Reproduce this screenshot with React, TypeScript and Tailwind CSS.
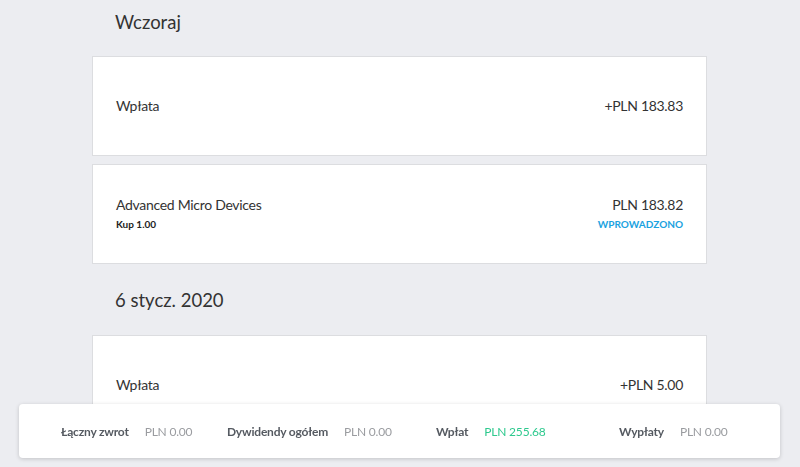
const groups = [
  {
    date: 'Wczoraj',
    first: true,
    items: [
      { title: 'Wpłata', amount: '+PLN 183.83' },
      { title: 'Advanced Micro Devices', sub: 'Kup 1.00', amount: 'PLN 183.82', status: 'WPROWADZONO' },
    ],
  },
  {
    date: '6 stycz. 2020',
    items: [{ title: 'Wpłata', amount: '+PLN 5.00' }],
  },
];

const totals = [
  { label: 'Łączny zwrot', value: 'PLN 0.00', w: 'w-[166px]' },
  { label: 'Dywidendy ogółem', value: 'PLN 0.00', w: 'w-[209px]' },
  { label: 'Wpłat', value: 'PLN 255.68', w: 'w-[183px]', green: true },
  { label: 'Wypłaty', value: 'PLN 0.00', w: 'w-[150px]' },
];

export default function App() {
  return (
    <div className="min-h-screen bg-[#ecedf1] font-['Lato',sans-serif] text-[#333]">
      <div className="ml-[92px] w-[615px] pb-16">
        {groups.map((g) => (
          <section key={g.date}>
            <h2
              className={`${g.first ? 'pt-[8px] pb-[20px]' : 'pt-[22px] pb-[21px]'} pl-[23px] text-[18.5px] leading-[28px] text-[#333]`}
            >
              {g.date}
            </h2>
            <div className="flex flex-col gap-[8px]">
              {g.items.map((it, i) => (
                <div
                  key={i}
                  className="flex h-[100px] items-center justify-between border border-[#dcdde0] bg-white px-[23px]"
                >
                  <div>
                    <p className="text-[14px] leading-[20px] tracking-[-0.3px]">{it.title}</p>
                    {it.sub && <p className="text-[10px] font-bold leading-[18px] text-[#222]">{it.sub}</p>}
                  </div>
                  <div className="text-right">
                    <p className="text-[14px] leading-[20px] tracking-[-0.3px]">{it.amount}</p>
                    {it.status && (
                      <p className="text-[10px] font-bold leading-[18px] text-[#1aa2e0]">{it.status}</p>
                    )}
                  </div>
                </div>
              ))}
            </div>
          </section>
        ))}
      </div>

      <div className="fixed bottom-[9px] left-[19px] flex h-[54px] w-[761px] items-center rounded-[4px] bg-white pl-[42px] pt-[2px] text-[12px] tracking-[-0.2px] shadow-[0_1px_4px_rgba(0,0,0,0.18)]">
        {totals.map((t) => (
          <div key={t.label} className={`flex items-center gap-[16px] ${t.w}`}>
            <span className="font-bold text-[#555a61]">{t.label}</span>
            <span className={t.green ? 'text-[#2ec98e]' : 'text-[#9a9ca0]'}>{t.value}</span>
          </div>
        ))}
      </div>
    </div>
  );
}
